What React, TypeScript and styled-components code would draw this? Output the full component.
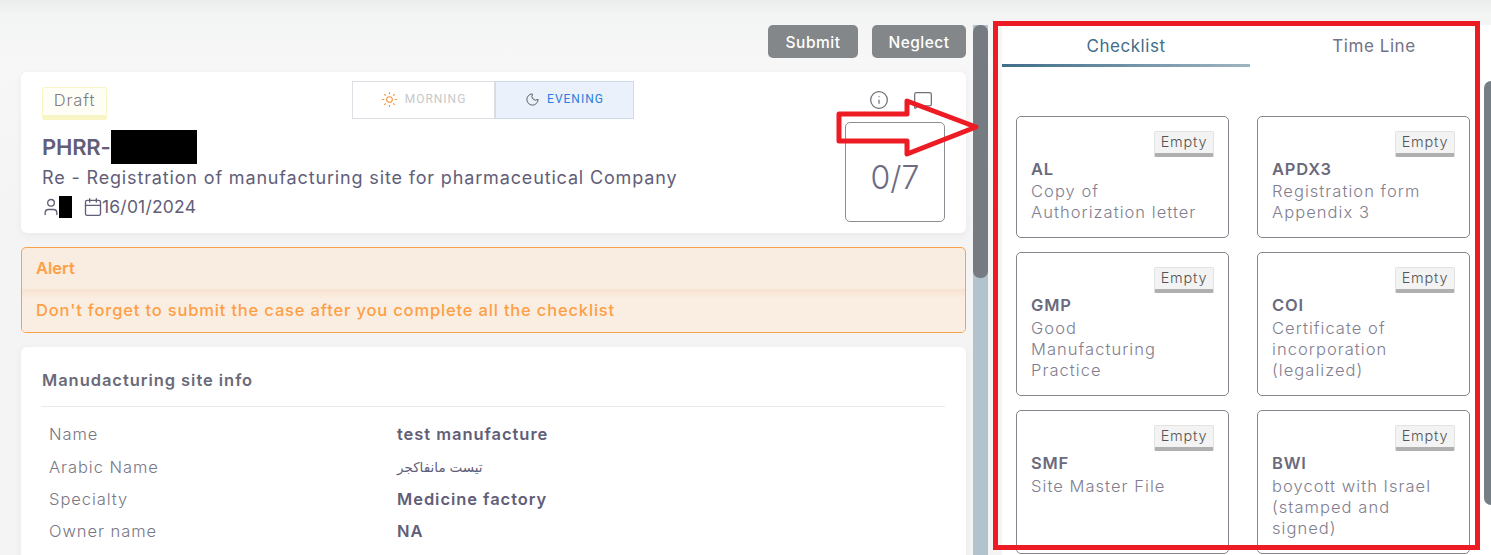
import { Fragment } from "react";
import { Calendar, Info, MessageSquare, Moon, Sun, User } from "lucide-react";
import styled, { createGlobalStyle } from "styled-components";

type CheckItem = {
  code: string;
  lines: string[];
  tall?: boolean;
};

const checklist: CheckItem[] = [
  { code: "AL", lines: ["Copy of", "Authorization letter"] },
  { code: "APDX3", lines: ["Registration form", "Appendix 3"] },
  { code: "GMP", lines: ["Good", "Manufacturing", "Practice"], tall: true },
  { code: "COI", lines: ["Certificate of", "incorporation", "(legalized)"], tall: true },
  { code: "SMF", lines: ["Site Master File"], tall: true },
  { code: "BWI", lines: ["boycott with Israel", "(stamped and", "signed)"], tall: true },
];

const siteInfo = [
  { label: "Name", value: "test manufacture" },
  { label: "Arabic Name", value: "تيست مانفاكجر", plain: true },
  { label: "Specialty", value: "Medicine factory" },
  { label: "Owner name", value: "NA" },
];

const GlobalStyle = createGlobalStyle`
  html, body {
    margin: 0;
    padding: 0;
    height: 555px;
    overflow: hidden;
  }

  body {
    font-family: Inter, "DejaVu Sans", sans-serif;
    color: #625e78;
  }

  * {
    box-sizing: border-box;
  }
`;

const Page = styled.div`
  display: flex;
  height: 555px;
  overflow: hidden;
  position: relative;
  background: linear-gradient(#ebecec 0, #f3f4f4 14px, #f7f7f7 60px, #f4f4f4 240px);
`;

const Main = styled.main`
  width: 973px;
  flex: none;
  padding: 25px 7px 0 21px;
`;

const Actions = styled.div`
  display: flex;
  justify-content: flex-end;
  gap: 14px;
  margin-bottom: 14px;
`;

const ActionButton = styled.button<{ $width: number }>`
  width: ${(p) => p.$width}px;
  height: 33px;
  padding: 2px 0 0;
  border: none;
  border-radius: 5px;
  background: #84878a;
  color: #fff;
  font-family: inherit;
  font-size: 15.5px;
  font-weight: 500;
  letter-spacing: 0.5px;
`;

const Card = styled.section`
  background: #fff;
  border-radius: 6px;
  box-shadow: 0 2px 8px rgba(0, 0, 0, 0.05);
`;

const HeaderCard = styled(Card)`
  height: 161px;
  padding: 9px 21px 0;
  margin-bottom: 14px;
`;

const HeaderTop = styled.div`
  display: grid;
  grid-template-columns: 310px auto 1fr;
  height: 41px;
`;

const DraftBadge = styled.span`
  justify-self: start;
  width: 65px;
  height: 33px;
  margin-top: 6px;
  border: 1px solid #f8f6c4;
  border-bottom-width: 5px;
  border-radius: 3px;
  background: #fffef6;
  color: #7d7c85;
  font-size: 16.5px;
  font-weight: 300;
  letter-spacing: 0.9px;
  line-height: 24px;
  text-align: center;
`;

const Shifts = styled.div`
  display: flex;
  height: 38px;
`;

const Shift = styled.div<{ $active?: boolean; $width: number }>`
  display: flex;
  align-items: center;
  justify-content: center;
  gap: 7px;
  width: ${(p) => p.$width}px;
  border: 1px solid ${(p) => (p.$active ? "#cfdbe8" : "#dcdfe4")};
  background: ${(p) => (p.$active ? "#eaf1fa" : "#fff")};
  color: ${(p) => (p.$active ? "#2b80dc" : "#c8c8c8")};
  font-family: "Roboto", sans-serif;
  font-size: 12px;
  letter-spacing: 1px;
  padding-bottom: 2px;
`;

const HeaderIcons = styled.div`
  display: flex;
  justify-content: flex-end;
  gap: 24px;
  padding: 9px 12px 0 0;
  color: #6f6f78;
`;

const HeaderBody = styled.div`
  display: flex;
  justify-content: space-between;
`;

const Titles = styled.div`
  display: flex;
  flex-direction: column;
  padding-top: 8px;
`;

const CaseNumber = styled.h1`
  display: flex;
  align-items: center;
  margin: 0;
  height: 34px;
  font-size: 22px;
  font-weight: 600;
  letter-spacing: -0.2px;
  line-height: 34px;
`;

const Redaction = styled.span<{ $width: number; $height: number }>`
  display: inline-block;
  width: ${(p) => p.$width}px;
  height: ${(p) => p.$height}px;
  background: #000;
`;

const Subject = styled.p`
  margin: 0;
  font-size: 18px;
  line-height: 28px;
  letter-spacing: 0.85px;
`;

const Meta = styled.div`
  display: flex;
  align-items: center;
  height: 29px;
  margin-left: -1px;
  font-size: 17.5px;
  letter-spacing: 0.2px;

  > svg {
    margin-right: -1px;
  }
`;

const MetaGroup = styled.span`
  display: inline-flex;
  align-items: center;
  margin-right: 11px;

  svg {
    margin-right: -2px;
  }
`;

const Counter = styled.div`
  width: 100px;
  height: 100px;
  padding-top: 10px;
  border: 1px solid #8c8c92;
  border-radius: 5px;
  display: flex;
  align-items: center;
  justify-content: center;
  font-size: 32px;
  font-weight: 300;
  color: #6e6c80;
`;

const Alert = styled.div`
  height: 86px;
  margin-bottom: 14px;
  border: 1px solid #f9a24a;
  border-radius: 5px;
  background: #f9ece0;
  color: #fd9f45;
  font-size: 16.5px;
  overflow: hidden;
`;

const AlertHead = styled.div`
  height: 41px;
  padding: 0 14px;
  font-weight: 600;
  line-height: 40px;
`;

const AlertBody = styled.div`
  height: 44px;
  padding: 0 14px;
  background: linear-gradient(#f8e2d0 0, #faeee3 10px, #faeee3 100%);
  font-weight: 500;
  line-height: 42px;
  letter-spacing: 0.83px;
`;

const InfoCard = styled(Card)`
  height: 260px;
  padding: 21px 21px 0 20px;
`;

const InfoTitle = styled.h2`
  margin: 0;
  padding: 0 0 13px 1px;
  border-bottom: 1px solid #e9e9ee;
  font-size: 16.5px;
  font-weight: 600;
  letter-spacing: 0.95px;
  line-height: 25px;
  color: #6b6a78;
`;

const InfoRows = styled.dl`
  margin: 11px 0 0;
  padding-left: 8px;
  display: grid;
  grid-template-columns: 348px 1fr;
  grid-auto-rows: 32.4px;
  align-items: center;
  font-size: 16.5px;
  letter-spacing: 0.95px;
`;

const InfoLabel = styled.dt`
  color: #787785;
  font-weight: 300;
`;

const InfoValue = styled.dd<{ $plain?: boolean }>`
  margin: 0;
  font-weight: ${(p) => (p.$plain ? 400 : 600)};
  font-size: ${(p) => (p.$plain ? "13.5px" : "16.5px")};
  letter-spacing: ${(p) => (p.$plain ? 0 : "0.95px")};
`;

const Track = styled.div`
  width: 15px;
  flex: none;
  margin-top: 25px;
  background: #b3c3cd;
`;

const Thumb = styled.div`
  height: 253px;
  border-radius: 7px;
  background: #757b80;
`;

const Side = styled.aside`
  flex: 1;
  min-width: 0;
  margin: 25px 0 0 14px;
  background: #fff;
  overflow: hidden;
`;

const Tabs = styled.div`
  display: flex;
  width: 496px;
`;

const Tab = styled.div<{ $active?: boolean }>`
  width: 248px;
  height: 42px;
  color: ${(p) => (p.$active ? "#3f6d8a" : "#737288")};
  font-size: 17px;
  line-height: 42px;
  text-align: center;
  letter-spacing: 0.55px;
  border-bottom: 3px solid transparent;
  border-image: ${(p) =>
    p.$active ? "linear-gradient(90deg, #3f6d8a, #a0b5c2) 1" : "none"};
`;

const SideBody = styled.div`
  display: flex;
`;

const Checklist = styled.div`
  display: grid;
  grid-template-columns: 213px 213px;
  column-gap: 28px;
  row-gap: 14px;
  align-content: start;
  margin: 49px 0 0 14px;
`;

const CheckCard = styled.article<{ $tall?: boolean }>`
  height: ${(p) => (p.$tall ? 144 : 122)}px;
  padding: 14px 14px 0;
  border: 1px solid #85858d;
  border-radius: 5px;
`;

const EmptyTag = styled.div`
  width: 60px;
  height: 26px;
  margin-left: auto;
  border: 1px solid #e3e3e3;
  border-bottom: 4px solid #b0b0b0;
  border-radius: 2px;
  background: #f3f3f3;
  color: #555;
  font-size: 14.5px;
  font-weight: 300;
  letter-spacing: 0.8px;
  line-height: 20px;
  text-align: center;
`;

const CheckCode = styled.h3`
  margin: 0;
  font-size: 16.5px;
  font-weight: 600;
  letter-spacing: 0.8px;
  line-height: 24px;
  color: #6b6a7c;
`;

const CheckText = styled.div<{ $tall?: boolean }>`
  margin-top: ${(p) => (p.$tall ? 1 : 0)}px;
  color: #807e90;
  font-size: 16.5px;
  font-weight: 300;
  line-height: 21px;
  letter-spacing: 1.05px;
`;

const SideThumb = styled.div`
  width: 7px;
  height: 424px;
  margin: 14px 0 0 14px;
  border-radius: 7px 0 0 7px;
  background: #757d85;
`;

// the red marks someone drew over the screenshot
const MarkBox = styled.div`
  position: absolute;
  left: 993px;
  top: 21px;
  width: 487px;
  height: 529px;
  border: 5px solid #ed1c24;
  pointer-events: none;
`;

const MarkArrow = styled.svg`
  position: absolute;
  left: 830px;
  top: 90px;
`;

export default function App() {
  return (
    <Page>
      <GlobalStyle />
      <Main>
        <Actions>
          <ActionButton $width={90}>Submit</ActionButton>
          <ActionButton $width={94}>Neglect</ActionButton>
        </Actions>

        <HeaderCard>
          <HeaderTop>
            <DraftBadge>Draft</DraftBadge>
            <Shifts>
              <Shift $width={143}>
                <Sun size={17} color="#f5943a" strokeWidth={1.5} />
                MORNING
              </Shift>
              <Shift $active $width={139}>
                <Moon size={15} color="#555" strokeWidth={1.5} />
                EVENING
              </Shift>
            </Shifts>
            <HeaderIcons>
              <Info size={20} strokeWidth={1.5} />
              <MessageSquare size={20} strokeWidth={1.5} />
            </HeaderIcons>
          </HeaderTop>
          <HeaderBody>
            <Titles>
              <CaseNumber>
                PHRR-
                <Redaction $width={86} $height={34} />
              </CaseNumber>
              <Subject>Re - Registration of manufacturing site for pharmaceutical Company</Subject>
              <Meta>
                <MetaGroup>
                  <User size={20} strokeWidth={1.6} />
                  <Redaction $width={13} $height={22} />
                </MetaGroup>
                <Calendar size={20} strokeWidth={1.6} />
                16/01/2024
              </Meta>
            </Titles>
            <Counter>0/7</Counter>
          </HeaderBody>
        </HeaderCard>

        <Alert>
          <AlertHead>Alert</AlertHead>
          <AlertBody>Don't forget to submit the case after you complete all the checklist</AlertBody>
        </Alert>

        <InfoCard>
          <InfoTitle>Manudacturing site info</InfoTitle>
          <InfoRows>
            {siteInfo.map((row) => (
              <Fragment key={row.label}>
                <InfoLabel>{row.label}</InfoLabel>
                <InfoValue $plain={row.plain}>{row.value}</InfoValue>
              </Fragment>
            ))}
          </InfoRows>
        </InfoCard>
      </Main>

      <Track>
        <Thumb />
      </Track>

      <Side>
        <Tabs>
          <Tab $active>Checklist</Tab>
          <Tab>Time Line</Tab>
        </Tabs>
        <SideBody>
          <Checklist>
            {checklist.map((item) => (
              <CheckCard key={item.code} $tall={item.tall}>
                <EmptyTag>Empty</EmptyTag>
                <CheckCode>{item.code}</CheckCode>
                <CheckText $tall={item.tall}>
                  {item.lines.map((line) => (
                    <div key={line}>{line}</div>
                  ))}
                </CheckText>
              </CheckCard>
            ))}
          </Checklist>
          <SideThumb />
        </SideBody>
      </Side>

      <MarkBox />
      <MarkArrow width="155" height="72" viewBox="0 0 155 72">
        <path
          d="M9 24 H77 V11 L146 37 L77 64 V51 H9 Z"
          fill="none"
          stroke="#ed1c24"
          strokeWidth="5"
          strokeLinejoin="round"
        />
      </MarkArrow>
    </Page>
  );
}
